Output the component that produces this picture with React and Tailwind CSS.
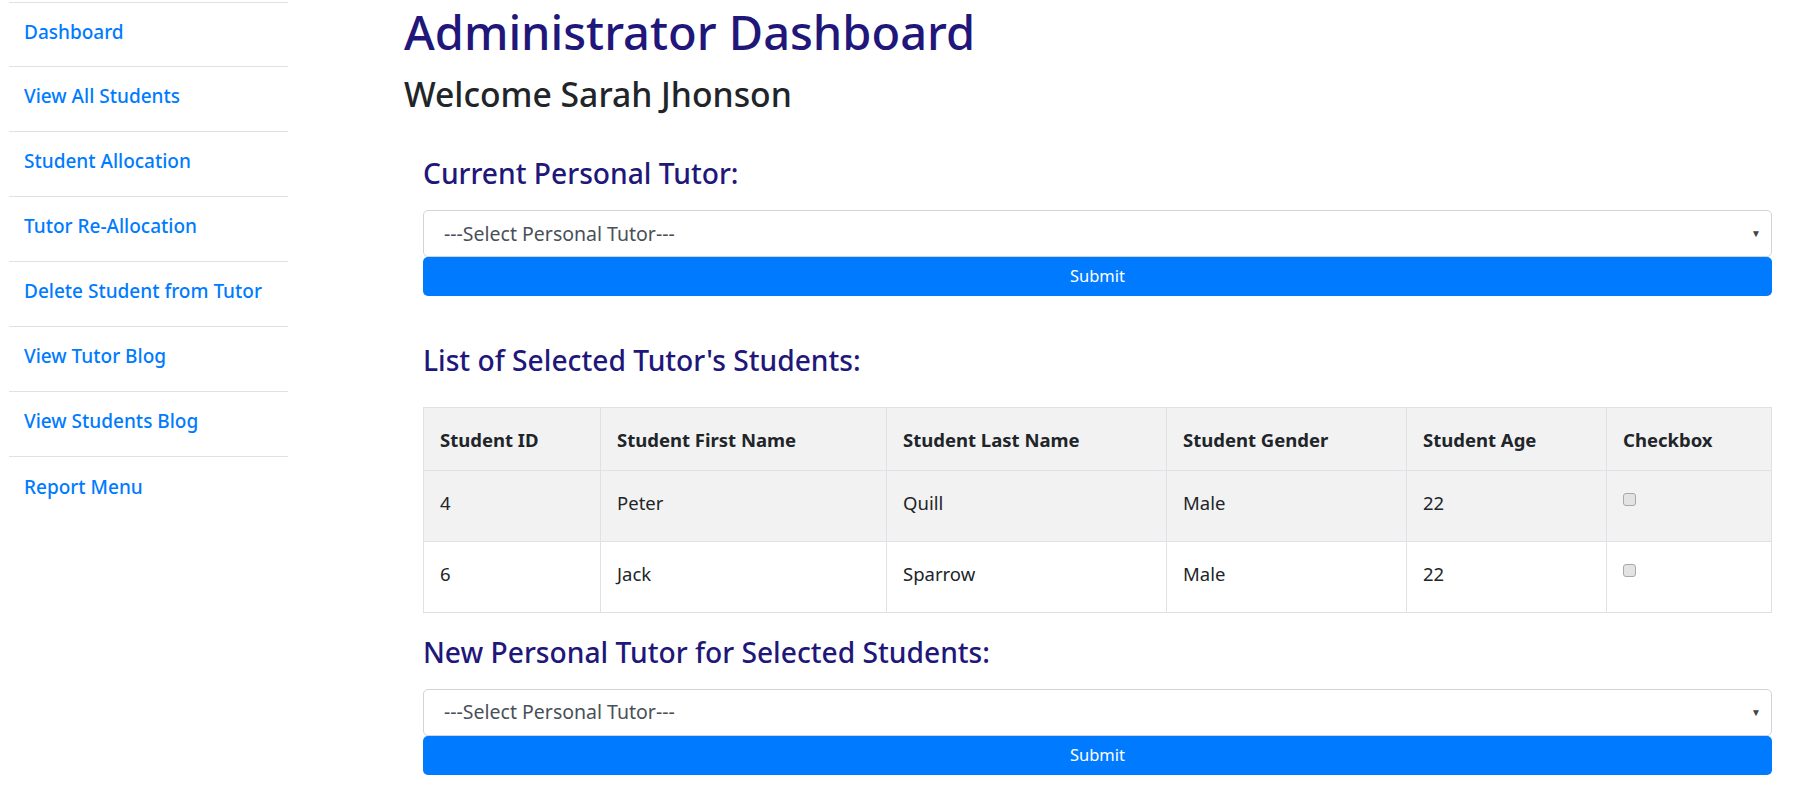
import React from 'react';

const navItems = [
  'Dashboard',
  'View All Students',
  'Student Allocation',
  'Tutor Re-Allocation',
  'Delete Student from Tutor',
  'View Tutor Blog',
  'View Students Blog',
  'Report Menu',
];

const students = [
  { id: 4, first: 'Peter', last: 'Quill', gender: 'Male', age: 22 },
  { id: 6, first: 'Jack', last: 'Sparrow', gender: 'Male', age: 22 },
];

const columns = [
  { label: 'Student ID', w: 'w-[177px]' },
  { label: 'Student First Name', w: 'w-[286px]' },
  { label: 'Student Last Name', w: 'w-[280px]' },
  { label: 'Student Gender', w: 'w-[240px]' },
  { label: 'Student Age', w: 'w-[200px]' },
  { label: 'Checkbox', w: '' },
];

const TutorSelect = () => (
  <div>
    <div className="flex h-[47px] items-center justify-between rounded-[5px] border border-[#ced4da] bg-white pl-[20px] pr-[10px] text-[19.5px] text-[#495057]">
      <span>---Select Personal Tutor---</span>
      <span className="text-[10px] text-[#444]">▼</span>
    </div>
    <button className="block h-[39px] w-full rounded-[5px] bg-[#007bff] text-[16.5px] text-white">
      Submit
    </button>
  </div>
);

const SectionTitle = ({ children, className = '' }) => (
  <h4 className={`text-[28.2px] font-medium leading-none text-[#21177a] ${className}`}>{children}</h4>
);

const App = () => {
  return (
    <div className="flex min-h-screen bg-white font-['Noto_Sans',sans-serif] text-[#212529]">
      <aside className="ml-[9px] w-[279px] pt-[2px]">
        {navItems.map((item, i) => (
          <div
            key={item}
            className={`flex h-[65px] items-center border-[#dee2e6] pb-[5px] pl-[15px] ${i === 0 ? 'border-y' : i < navItems.length - 1 ? 'border-b' : ''}`}
          >
            <a href="#" className="text-[19px] font-medium text-[#007bff]">
              {item}
            </a>
          </div>
        ))}
      </aside>

      <main className="ml-[116px] flex-1 pr-[18px]">
        <h1 className="mt-[2px] text-[47px] font-medium leading-[60px] text-[#21177a]">Administrator Dashboard</h1>
        <h3 className="mt-[12px] text-[33.7px] font-medium leading-[40px] text-[#212529]">Welcome Sarah Jhonson</h3>

        <div className="px-[19px]">
          <SectionTitle className="mt-[45px]">Current Personal Tutor:</SectionTitle>
          <div className="mt-[23px]">
            <TutorSelect />
          </div>

          <SectionTitle className="mt-[50px]">List of Selected Tutor's Students:</SectionTitle>
          <table className="mt-[33px] w-full border-collapse border border-[#dee2e6] text-left text-[18.5px]">
            <thead>
              <tr className="bg-[#f2f2f2]">
                {columns.map((c) => (
                  <th key={c.label} className={`h-[63px] border border-[#dee2e6] px-[16px] align-middle font-bold ${c.w}`}>
                    {c.label}
                  </th>
                ))}
              </tr>
            </thead>
            <tbody>
              {students.map((s, i) => (
                <tr key={s.id} className={i === 0 ? 'bg-[#f2f2f2]' : 'bg-white'}>
                  <td className="h-[71px] border border-[#dee2e6] px-[16px] pb-[8px]">{s.id}</td>
                  <td className="border border-[#dee2e6] px-[16px] pb-[8px]">{s.first}</td>
                  <td className="border border-[#dee2e6] px-[16px] pb-[8px]">{s.last}</td>
                  <td className="border border-[#dee2e6] px-[16px] pb-[8px]">{s.gender}</td>
                  <td className="border border-[#dee2e6] px-[16px] pb-[8px]">{s.age}</td>
                  <td className="border border-[#dee2e6] px-[16px] pb-[14px]">
                    <span className="block h-[13px] w-[13px] rounded-[3px] border border-[#a9a9a9] bg-[#e3e3e3]" />
                  </td>
                </tr>
              ))}
            </tbody>
          </table>

          <SectionTitle className="mt-[25px]">New Personal Tutor for Selected Students:</SectionTitle>
          <div className="mt-[22px] pb-[12px]">
            <TutorSelect />
          </div>
        </div>
      </main>
    </div>
  );
};

export default App;
